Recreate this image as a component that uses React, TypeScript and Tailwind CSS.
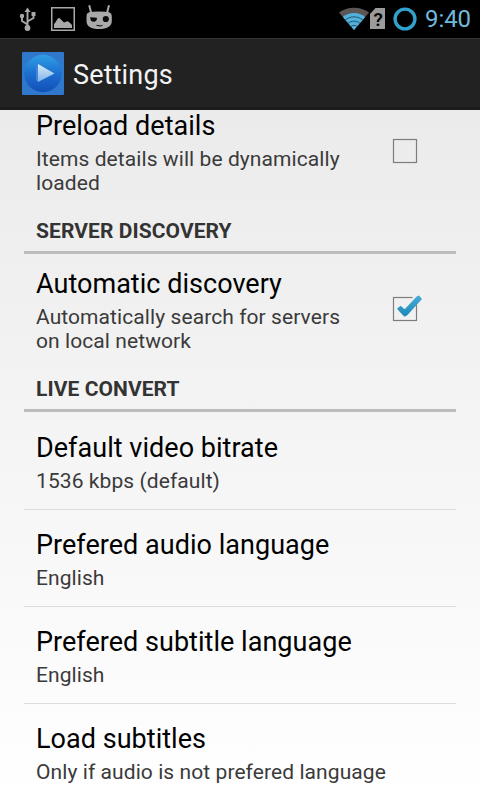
import { useState } from 'react';

type Pref = {
  id: string;
  title: string;
  summary: string;
};

const LIVE_CONVERT: Pref[] = [
  { id: 'bitrate', title: 'Default video bitrate', summary: '1536 kbps (default)' },
  { id: 'audio', title: 'Prefered audio language', summary: 'English' },
  { id: 'subtitle', title: 'Prefered subtitle language', summary: 'English' },
  { id: 'load', title: 'Load subtitles', summary: 'Only if audio is not prefered language' },
];

function UsbIcon() {
  return (
    <svg width="18" height="26" viewBox="0 0 18 26" className="ml-[19px] mt-[6px]" fill="none" stroke="#a9a9a9">
      <path d="M8.500 4v17M8.500 18.500L3 15v-5M8.500 15.500L14.500 12V8" strokeWidth="1.900" />
      <path d="M8.500 1.500L11.500 6h-6z" fill="#a9a9a9" stroke="none" />
      <circle cx="8.500" cy="22" r="2.900" fill="#a9a9a9" stroke="none" />
      <circle cx="3" cy="10" r="2.200" fill="#a9a9a9" stroke="none" />
      <path d="M12.500 6h4v4h-4z" fill="#a9a9a9" stroke="none" />
    </svg>
  );
}

function PictureIcon() {
  return (
    <svg width="24" height="24" viewBox="0 0 24 24" className="ml-[14px] mt-[7px]">
      <rect x=".75" y=".75" width="22.500" height="22.500" fill="none" stroke="#a9a9a9" strokeWidth="1.500" />
      <path d="M3 21v-4l1-1 2.500-4 1.500-1.200 1.500 1.200 3.500 3.500 3.500-1.300 1.500.8L21 18v3z" fill="#a9a9a9" />
    </svg>
  );
}

function CidIcon() {
  return (
    <svg width="28" height="26" viewBox="0 0 28 26" className="ml-[10px] mt-[4px]">
      <path d="M4.200 1.200L6.200 9M24 1.200L22 9" stroke="#a9a9a9" strokeWidth="2" />
      <path
        d="M1.500 13C1.500 8.800 3 8 8 7.700Q14 7.200 20 7.700C25.300 8 26.800 8.800 26.800 13V17C26.800 22.500 22 25 14 25S1.500 22.500 1.500 17Z"
        fill="#a9a9a9"
      />
      <path d="M5.200 13.200L12 13.800C12 16.500 10.800 17.800 8.600 17.800S5.200 16.200 5.200 13.200Z" fill="#0a0a0a" />
      <circle cx="20.800" cy="15" r="3.100" fill="#0a0a0a" />
      <path d="M11.500 21.300L16 22L17.500 21.200" stroke="#0a0a0a" strokeWidth="1" fill="none" />
    </svg>
  );
}

function WifiIcon() {
  return (
    <svg width="30" height="24" viewBox="0 0 30 24" className="mt-[7px]" fill="none">
      <path d="M15 23L0 5.500C8-.8 22-.8 30 5.500z" fill="#5b5653" />
      <path d="M15 23L3.800 9.900C10 4.800 20 4.800 26.200 9.900z" fill="#52b1dc" />
      <path d="M6.200 13C11.500 8.800 18.500 8.800 23.800 13M9 16.300C12.500 13.500 17.500 13.500 21 16.300M11.800 19.600C13.800 18 16.200 18 18.200 19.600" stroke="#1d4a5e" strokeWidth=".9" />
    </svg>
  );
}

function SimIcon() {
  return (
    <span className="relative mt-[8px] ml-[1px] h-[21px] w-[15px]">
      <svg width="15" height="21" viewBox="0 0 15 21">
        <path d="M5.500 0H15v21H0V6z" fill="#9b9b9b" />
      </svg>
      <span className="absolute inset-x-0 top-[1px] pl-[1px] text-center text-[19px] leading-[21px] font-semibold text-black">?</span>
    </span>
  );
}

function AppIcon() {
  return (
    <svg width="42" height="43" viewBox="0 0 42 43">
      <defs>
        <linearGradient id="disc" x1="0" y1="0" x2="0" y2="1">
          <stop offset="0" stopColor="#2f9fe6" />
          <stop offset=".5" stopColor="#1c6fd0" />
          <stop offset="1" stopColor="#1250b8" />
        </linearGradient>
        <linearGradient id="play" x1="0" y1="0" x2="0" y2="1">
          <stop offset="0" stopColor="#d8ebfa" />
          <stop offset="1" stopColor="#7fb4ea" />
        </linearGradient>
      </defs>
      <rect width="42" height="43" rx="1" fill="#2f78cc" />
      <circle cx="21" cy="21.500" r="18.700" fill="url(#disc)" />
      <path d="M14 13l2-1v18l-2-2z" fill="#3f86d8" />
      <path d="M16 12L32.500 21.500 16 30z" fill="url(#play)" />
    </svg>
  );
}

function CheckBox({ checked }: { checked: boolean }) {
  return (
    <svg width="36" height="32" viewBox="0 0 36 32" className="mb-[3px]">
      <defs>
        <linearGradient id="tick" x1="0" y1="0" x2="0" y2="1">
          <stop offset="0" stopColor="#45add6" />
          <stop offset="1" stopColor="#1d87b8" />
        </linearGradient>
      </defs>
      <rect x="4.500" y="4.500" width="23" height="23" fill="none" stroke="#7d7d7d" strokeWidth="1.200" />
      {checked && (
        <>
          <path d="M23 3h8v9h-5z" fill="#efefef" />
          <path d="M8 15.800l3.500-3 4.200 3.400L27.700 3.500l2.300-1L33 6 18.500 22l-2.900 1.700-3.100-3z" fill="url(#tick)" />
        </>
      )}
    </svg>
  );
}

function PrefText({ title, summary }: { title: string; summary: string }) {
  return (
    <div className="text-left">
      <div className="text-[27px] leading-8 tracking-[0.03px] whitespace-nowrap text-black">{title}</div>
      <div className="mt-[5px] text-[21px] leading-6 tracking-[0.08px] text-[#3a3a3a]">{summary}</div>
    </div>
  );
}

function CheckPref({ title, summary, initial }: { title: string; summary: string; initial: boolean }) {
  const [checked, setChecked] = useState(initial);

  return (
    <button
      onClick={() => setChecked(c => !c)}
      className="flex w-full items-center justify-between pt-[14px] pr-[31px] pb-6 pl-3"
    >
      <div className="w-[330px]">
        <PrefText title={title} summary={summary} />
      </div>
      <CheckBox checked={checked} />
    </button>
  );
}

function Category({ label }: { label: string }) {
  return (
    <h2 className="border-b-[3px] border-[#bdbdbd] pb-2 pl-3 text-[21px] leading-6 font-bold tracking-[0.08px] text-[#333]">
      {label}
    </h2>
  );
}

export default function App() {
  return (
    <div className="flex h-[800px] w-[480px] flex-col overflow-hidden bg-black font-[Roboto,sans-serif]">
      {/* Status bar */}
      <div className="flex h-[38px] shrink-0 items-start">
        <UsbIcon />
        <PictureIcon />
        <CidIcon />
        <div className="ml-auto flex items-start pr-[9px]">
          <WifiIcon />
          <SimIcon />
          <svg width="24" height="24" viewBox="0 0 24 24" className="mt-[7px] ml-[8px]">
            <circle cx="12" cy="12" r="9.900" fill="none" stroke="#2fa3cd" strokeWidth="3.400" />
          </svg>
          <span className="ml-[8px] text-[24px] leading-[38px] tracking-[-0.1px] text-[#6fb9dc]">9:40</span>
        </div>
      </div>

      {/* Action bar */}
      <header className="flex h-[72px] shrink-0 items-center border-t border-b-[3px] border-t-[#333] border-b-[#1b1b1b] bg-[#222] pl-[22px]">
        <AppIcon />
        <h1 className="mt-1 ml-[9px] text-[27px] leading-8 tracking-[0.15px] text-[#f3f3f3]">Settings</h1>
      </header>

      {/* Preference list, scrolled slightly past its first row */}
      <main className="min-h-0 flex-1 overflow-hidden bg-linear-to-b from-[#ebebeb] to-white px-6">
        <div className="-mt-[14px]">
          <CheckPref title="Preload details" summary="Items details will be dynamically loaded" initial={false} />
          <Category label="SERVER DISCOVERY" />
          <CheckPref title="Automatic discovery" summary="Automatically search for servers on local network" initial={true} />
          <Category label="LIVE CONVERT" />
          <div className="divide-y divide-[#dcdcdc]">
            {LIVE_CONVERT.map(p => (
              <div key={p.id} className="pt-[19px] pb-4 pl-3 first:pt-5">
                <PrefText title={p.title} summary={p.summary} />
              </div>
            ))}
          </div>
        </div>
      </main>
    </div>
  );
}
